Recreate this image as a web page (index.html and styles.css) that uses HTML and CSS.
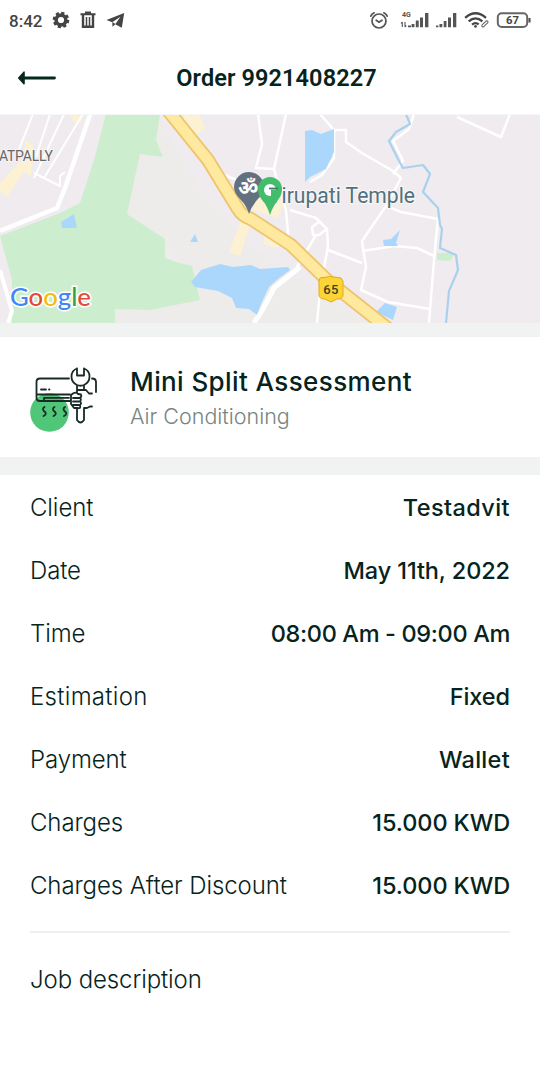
FILE: index.html
```html
<!DOCTYPE html>
<html lang="en">
<head>
<meta charset="utf-8">
<title>Order 9921408227</title>
<link rel="stylesheet" href="styles.css">
</head>
<body>
<div class="status">
  <div class="status-left">
    <span class="clock">8:42</span>
    <svg class="gear" width="18" height="18" viewBox="0 0 18 18"><circle cx="9" cy="9" r="4.9" fill="none" stroke="#444" stroke-width="3.6"/><circle cx="9" cy="9" r="7" fill="none" stroke="#444" stroke-width="2.6" stroke-dasharray="3.1 2.4"/></svg>
    <svg class="trash" width="16" height="18" viewBox="0 0 16 18"><path d="M0.5 3.2H15.5M5 1.5H11" fill="none" stroke="#444" stroke-width="2"/><path d="M3 3V15.7H13V3" fill="none" stroke="#444" stroke-width="2.4"/><path d="M6.5 6V15M9.5 6V15" fill="none" stroke="#444" stroke-width="1.5"/></svg>
    <svg class="plane" width="19" height="17" viewBox="0 0 19 17"><path d="M0.5 8L18.2 1L15.8 15.7L9.2 12.2L14.5 4.8L6.2 10.2Z" fill="#444"/><path d="M6.4 10V14.8L9.5 12Z" fill="#444"/></svg>
  </div>
  <svg class="status-right" width="166" height="24" viewBox="366 8 166 24">
    <g fill="none" stroke="#555" stroke-width="1.7" stroke-linecap="round">
      <circle cx="379" cy="21" r="7"/><path d="M376.2 20.2L379 22.3L382 20.2M370.8 16.2Q371.8 13.8 374.2 12.8M387.2 16.2Q386.2 13.8 383.8 12.8"/>
    </g>
    <text class="net" x="402" y="16.5">4G</text>
    <path d="M402.3 22V27M401 23.4L402.3 22M405 22V27M405 27L406.3 25.6" stroke="#555" stroke-width="1.1" fill="none"/>
    <path d="M408 25.6H411V27.3H408ZM411.6 24H414.4V27.3H411.6ZM415.8 20.5H418.7V27.3H415.8ZM420 17.5H423V27.3H420ZM425 13H428.4V27.3H425Z" fill="#555"/>
    <path d="M436 25.6H438.4V27.3H436ZM439.5 24H442.3V27.3H439.5ZM443.7 21H446.5V27.3H443.7ZM448 17.5H451V27.3H448ZM453 13H456.3V27.3H453Z" fill="#555"/>
    <g fill="none" stroke="#444" stroke-width="2.3"><path d="M465.2 17.8Q475.5 8.8 486 17.8M468.7 21.3Q475.5 15.4 482.4 21.3M472 24.6Q475.5 21.8 478.7 24.4"/></g>
    <circle cx="475.5" cy="26.4" r="1.3" fill="#444"/>
    <path d="M481.8 25.2L486.4 20.8Q488.8 21 487.6 23L484 26.4Q481.6 27.8 481.8 25.2" fill="#fff" stroke="#666" stroke-width="1.1"/>
    <rect x="497.8" y="13.3" width="29.4" height="13.6" rx="4" fill="none" stroke="#666" stroke-width="2"/>
    <path d="M529.5 18V22.5" stroke="#555" stroke-width="2.2"/>
    <text class="bat" x="506" y="24.3" textLength="13" lengthAdjust="spacingAndGlyphs">67</text>
  </svg>
</div>
<header class="header">
  <svg class="back" width="40" height="16" viewBox="17 70 40 16"><path d="M22 78H54.5" stroke="#06291f" stroke-width="2.8" stroke-linecap="round"/><path d="M18.8 78L24 72.2V83.8Z" fill="#06291f" stroke="#06291f" stroke-width="1.6" stroke-linejoin="round"/></svg>
  <h1 class="title">Order 9921408227</h1>
</header>
<svg class="map" width="540" height="209" viewBox="0 114 540 209">
  <rect y="114" width="540" height="209" fill="#efebee"/>
  <path d="M157 114L200 190L250 245L300 280L368 323H115L115 309L180 303V262L165 248V239L127 215L140 156Z" fill="#eeebeb"/>
  <path d="M106 114H160L156 140L163 157L140 154L127 214L165 239V258L180 263L192 266L200 300L150 310L115 309V323H12L0 236L60 213L80 203L94 160Z" fill="#cdeece"/>
  <g fill="#fcf1d3"><path d="M70 114H82L81 123L73 122ZM26 140L33 145L31 176L24 172L7 197L0 191V183L22 160ZM184 114L200 116L205 128L196 136L184 126ZM260 190L284 202L278 218L252 210ZM243 214L252 219L240 256L229 252ZM265 232L288 240L276 248L263 244Z"/></g>
  <path d="M0 236L12 280V323L8 323L0 300Z" fill="#efebee"/>
  <g fill="none" stroke="#fff" stroke-linejoin="round">
    <path d="M33 114L16 157M50 114L36 157M64 114L34 178M83 114L44 178M34 173L60 186L60 176L65 172" stroke-width="2"/>
    <path d="M91 112L65 188L57 208L0 231" stroke-width="4.5"/>
    <path d="M0 270L12 311L8 323" stroke-width="4"/>
    <path d="M258 114L262 144L256 168L274 169L286 114M256 168M218 173L240 181M274 169L286 210L289 245M290 210L316 218L327 229L319 235H313L312 227L319 222M327 229L328 246L320 290L317 323M328 250L362 263M316 235L297 267M310 182L322 175L334 158V130L320 114M334 130H346V142L362 153L393 171L401 178L386 206L362 241L366 267L361 290L388 302L430 309M362 251L395 246L417 248L434 256M386 206L401 212L438 219L434 260L429 323M457 117L501 137L510 114M414 114L409 129L393 141L403 161L393 174" stroke-width="2.5"/>
    <path d="M300 267L274 288L263 309L254 323" stroke-width="5"/>
  </g>
  <g fill="#acd7fd">
    <path d="M74 214L61 222L62 228H77ZM305 131L312 130L321 134L334 129L334 152L326 169L310 177L305 182ZM195 234L198 242H190ZM400 230L396 243L398 246H384L383 240L391 239ZM385 303L397 307L393 320L376 312Z"/>
    <path d="M191 282L201 270L220 264L233 267L251 265L260 269L288 267L290 270L278 279L269 287L261 304L257 315L249 309L236 308L232 298L218 291L195 287Z"/>
  </g>
  <path d="M437 253H455L450 261L437 260Z" fill="#cdeece"/>
  <path d="M406 114L410 124L396 132L389 141L399 161L403 168L423 165L430 174L423 192L438 208L440 225L442 229L440 248L456 255L458 270L449 291L446 323" fill="none" stroke="#a9d1ee" stroke-width="2.2" stroke-linejoin="round"/>
  <path d="M162 103L208 160L238 209Q242 216 251 219L291 245L328 281L395 334" fill="none" stroke="#edc46c" stroke-width="14"/>
  <path d="M162 103L208 160L238 209Q242 216 251 219L291 245L328 281L395 334" fill="none" stroke="#fee99e" stroke-width="10.5"/>
  <path d="M320 278Q330 275 341 278L343 281V295Q343 299 337 299L331 302L325 299Q319 299 319 295V281Z" fill="#fbd536" stroke="#e5a91d" stroke-width="1"/>
  <text class="road" x="323.3" y="293.5" textLength="15">65</text>
  <text class="place" x="-1" y="160.5" textLength="54">ATPALLY</text>
  <path d="M249 214Q247 206 240 199Q234 193 234 187A15 15 0 0 1 264 187Q264 193 257 200Q251 207 249 214" fill="#63717f"/>
  <text class="om" x="238" y="195">ॐ</text>
  <text class="temple" x="269" y="203" textLength="146" lengthAdjust="spacingAndGlyphs">Tirupati Temple</text>
  <path d="M270 215Q267 205 262 200Q258 195 258 189A12 12 0 0 1 282 189Q282 195 278 200Q273 206 270 215" fill="#42bd6c"/>
  <circle cx="270" cy="190" r="6" fill="#fff"/><path d="M269 188.5H278" stroke="#4b786b" stroke-width="1.8"/><path d="M271 189.5H276V197H271Z" fill="#42bd6c"/>
  <text class="google" x="10" y="305.5" textLength="81" lengthAdjust="spacingAndGlyphs"><tspan fill="#4285f4">G</tspan><tspan fill="#e24a3b">o</tspan><tspan fill="#f3bb16">o</tspan><tspan fill="#4285f4">g</tspan><tspan fill="#33a050">l</tspan><tspan fill="#e24a3b">e</tspan></text>
  <path d="M0 114.5H540" stroke="#f7f6f7" stroke-width="1"/>
</svg>
<section class="service">
  <svg class="service-icon" width="68" height="68" viewBox="30 366 68 68">
    <circle cx="49.5" cy="413.5" r="19.3" fill="#4fc678"/>
    <g fill="none" stroke="#182b26" stroke-width="1.8" stroke-linecap="round" stroke-linejoin="round">
      <path d="M69 379.5H40Q36.5 379.5 36.5 383V399Q36.5 402 40 402H70M37 395.5H70M44 402V398.8H69M41 390.5H46M49 390.5H49.5M92 379.5Q96 379.5 96 383V393"/>
      <path d="M77 369.5Q71.5 371.5 71.5 377.5Q71.5 383.5 77 386V394M84 369.5Q89.500 371.500 89.500 377.500Q89.500 383.500 84 386V391M77 369.5V376.500H84V369.500M77 386Q80.500 387.500 84 386M77 391H86L89 394.500H92M73 394.500Q76 392.500 78 395L81 395.500Q82 398 79.500 399Q82 400 80 402.500Q82 404 80 406Q81 410 78 409H74L71 405V396ZM73 399H80M73 402.500H80M73 406H80M77 410V421Q80.500 426 84 421V409H87L90 407.500H92"/>
      <path d="M44.500 408Q41.500 410 44.500 412.500T43.500 417M54.500 408Q51.500 410 54.500 412.500T53.500 417M65 408Q62 410 65 412.500T64 417"/>
    </g>
  </svg>
  <div class="service-text">
    <h2 class="service-name">Mini Split Assessment</h2>
    <p class="service-type">Air Conditioning</p>
  </div>
</section>
<main class="details">
  <dl class="rows">
    <div class="row"><dt class="label">Client</dt><dd class="value client">Testadvit</dd></div>
    <div class="row"><dt class="label">Date</dt><dd class="value date">May 11th, 2022</dd></div>
    <div class="row"><dt class="label">Time</dt><dd class="value time">08:00 Am - 09:00 Am</dd></div>
    <div class="row"><dt class="label estimation">Estimation</dt><dd class="value">Fixed</dd></div>
    <div class="row"><dt class="label">Payment</dt><dd class="value wallet">Wallet</dd></div>
    <div class="row"><dt class="label">Charges</dt><dd class="value">15.000 KWD</dd></div>
    <div class="row"><dt class="label">Charges After Discount</dt><dd class="value">15.000 KWD</dd></div>
  </dl>
  <h3 class="job">Job description</h3>
</main>
</body>
</html>
```
FILE: styles.css
```css
* { box-sizing: border-box; margin: 0; padding: 0; }
body { width: 540px; height: 1080px; background: #fff; color: #06241c; font-family: Inter, sans-serif; overflow: hidden; }
svg { display: block; flex: none; }
.status { height: 40px; display: flex; justify-content: space-between; align-items: center; padding: 0 8px 0 9px; }
.status-left { display: flex; align-items: center; }
.clock { font: 500 17px/20px Roboto, sans-serif; color: #444; width: 43px; padding-top: 2px; }
.trash { margin-left: 10px; }
.plane { margin-left: 10px; }
.net { font: 700 7px Roboto, sans-serif; fill: #555; }
.bat { font: 700 11px Roboto, sans-serif; fill: #444; }
.header { height: 74px; display: grid; grid-template-columns: 40px 1fr 40px; align-items: center; padding: 2px 4px 0 17px; }
.title { font: 600 23.5px/28px Roboto, sans-serif; letter-spacing: 0.1px; text-align: center; white-space: nowrap; }
.road { font: 500 13px Roboto, sans-serif; fill: #47401e; }
.place { font: 400 14px Roboto, sans-serif; fill: #666; stroke: #f7f4f6; stroke-width: 2px; paint-order: stroke; }
.om { font: 700 20px "Noto Sans", "DejaVu Sans", sans-serif; fill: #fff; }
.temple { font: 400 22px Roboto, sans-serif; fill: #53717b; stroke: #f8f6f8; stroke-width: 2.5px; paint-order: stroke; }
.google { font: 500 25px Lato, sans-serif; stroke: #fff; stroke-width: 3px; paint-order: stroke; }
.service { height: 152px; border-top: 14px solid #f1f3f3; border-bottom: 18px solid #f1f3f3; display: flex; align-items: center; padding: 4px 30px 0; gap: 32px; }
.service-name { font-size: 26px; line-height: 34px; font-weight: 500; letter-spacing: 0.4px; white-space: nowrap; margin-top: -2px; }
.service-type { font-size: 21.5px; line-height: 30px; font-weight: 300; color: #778580; margin-top: 2px; }
.details { padding: 1px 30px 0; }
.rows { border-bottom: 2px solid #edf0ef; padding-bottom: 14px; }
.row { height: 63px; display: flex; justify-content: space-between; align-items: center; font-size: 24px; line-height: 32px; white-space: nowrap; }
.label { font-weight: 300; letter-spacing: -0.1px; }
.estimation { letter-spacing: 0.3px; }
.value { font-size: 23.5px; font-weight: 500; letter-spacing: -0.1px; }
.client { letter-spacing: 0.4px; }
.time { letter-spacing: -0.35px; }
.wallet { letter-spacing: 0.3px; }
.job { font-size: 24px; font-weight: 300; letter-spacing: -0.1px; line-height: 32px; margin-top: 31px; }
```
